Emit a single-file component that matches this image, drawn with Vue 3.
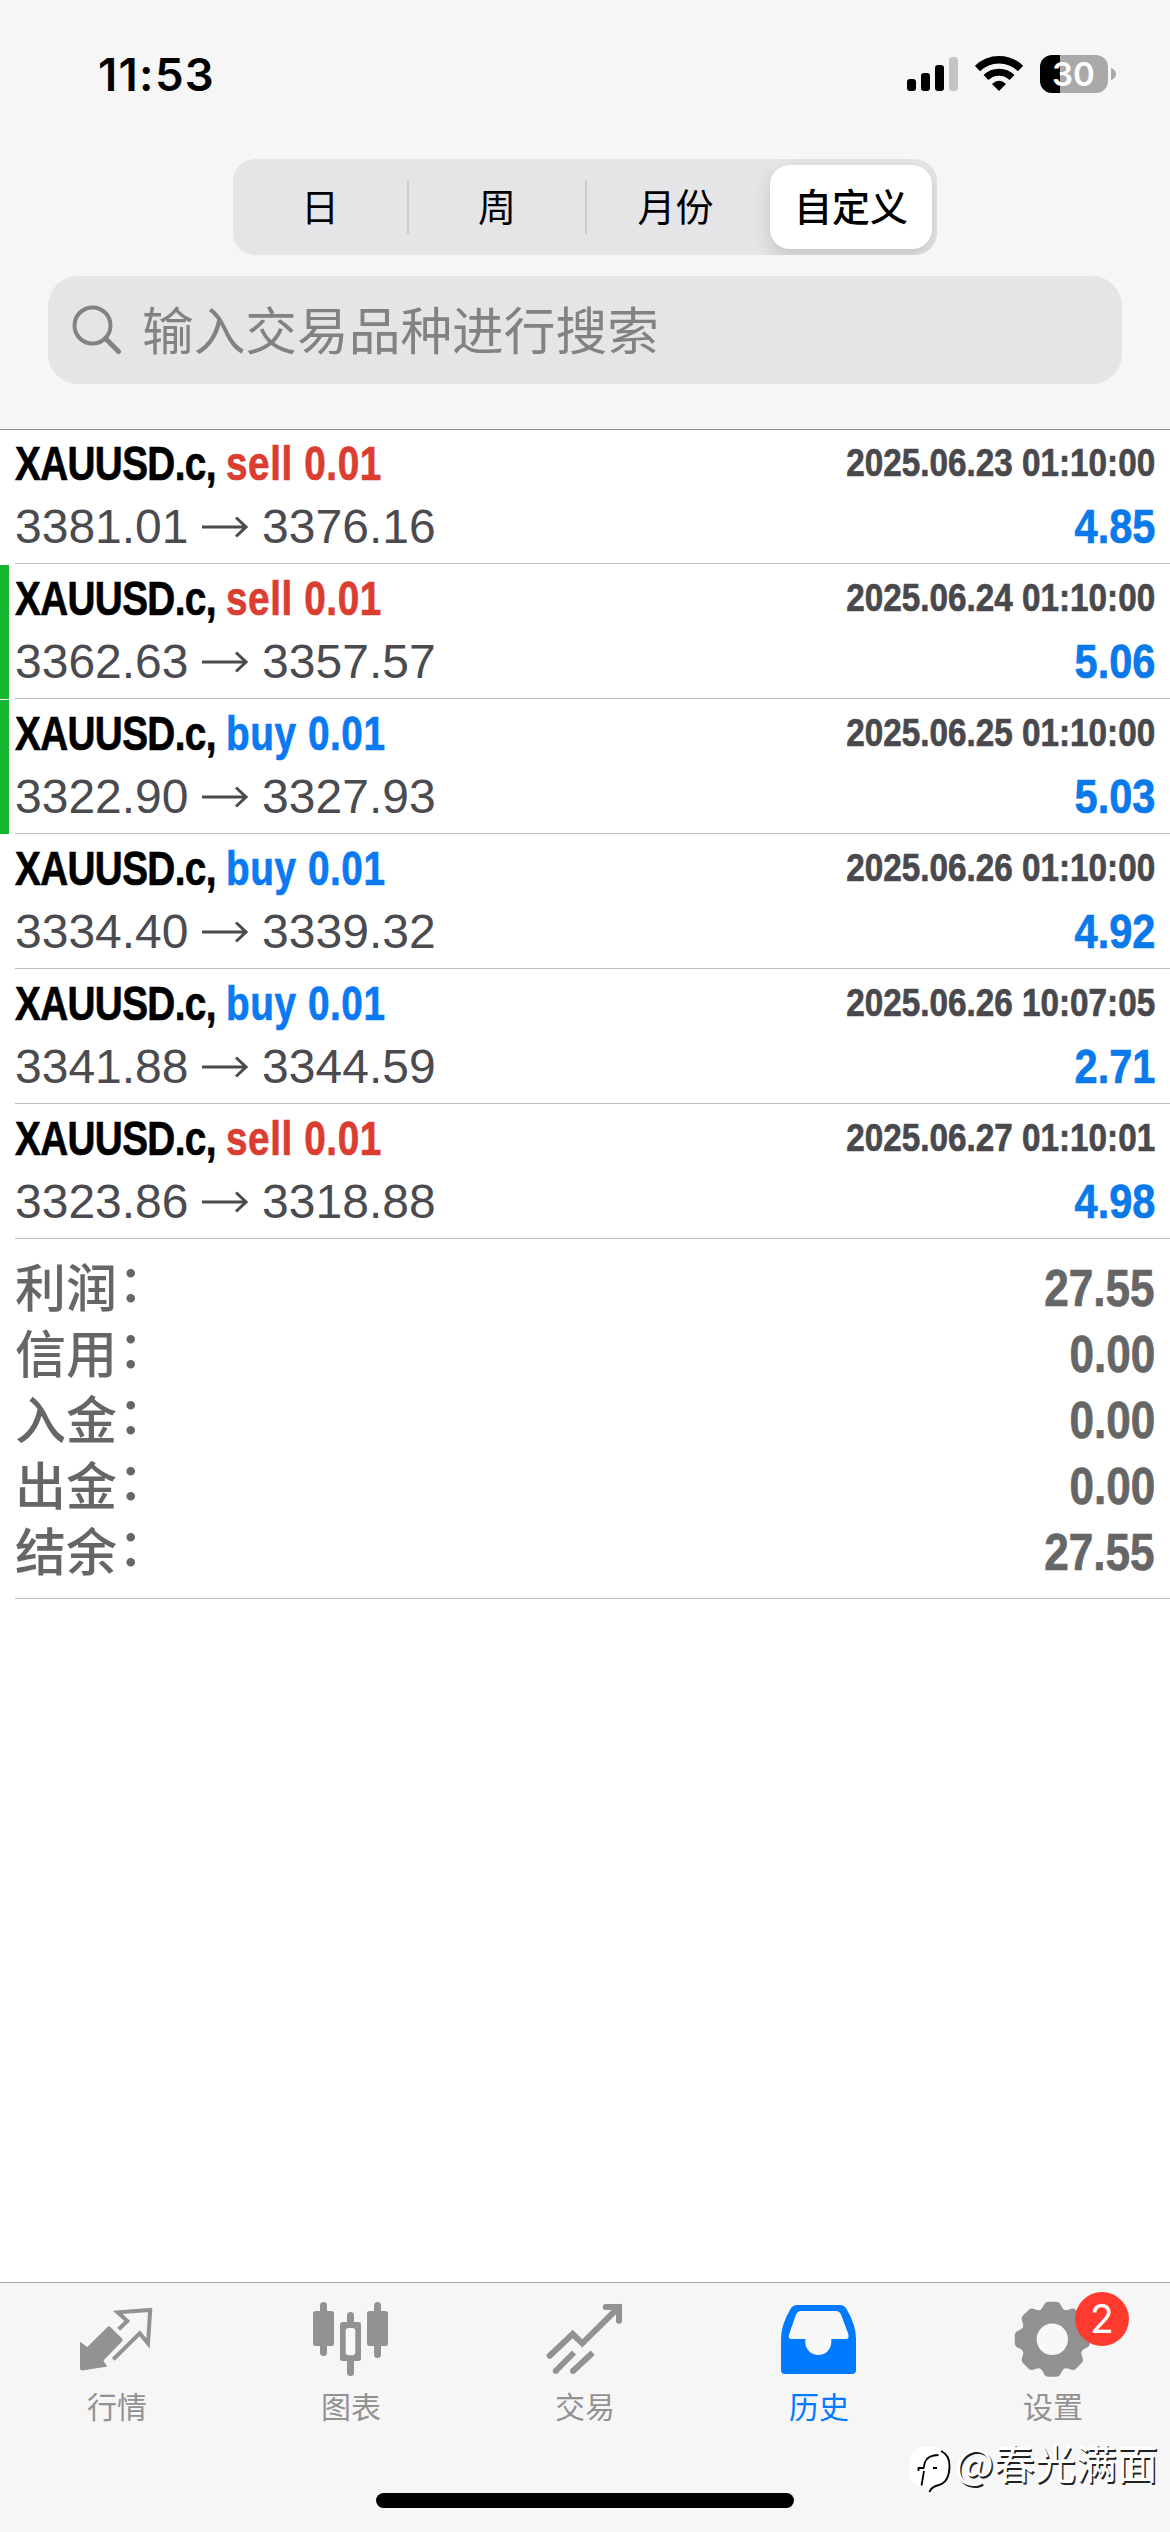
<script setup>
const segments = ['日', '周', '月份']
const deals = [
  { side: 'sell', open: '3381.01', close: '3376.16', time: '2025.06.23 01:10:00', profit: '4.85' },
  { side: 'sell', open: '3362.63', close: '3357.57', time: '2025.06.24 01:10:00', profit: '5.06', marked: true },
  { side: 'buy', open: '3322.90', close: '3327.93', time: '2025.06.25 01:10:00', profit: '5.03', marked: true },
  { side: 'buy', open: '3334.40', close: '3339.32', time: '2025.06.26 01:10:00', profit: '4.92' },
  { side: 'buy', open: '3341.88', close: '3344.59', time: '2025.06.26 10:07:05', profit: '2.71' },
  { side: 'sell', open: '3323.86', close: '3318.88', time: '2025.06.27 01:10:01', profit: '4.98' },
]
const totals = [
  { label: '利润', value: '27.55' },
  { label: '信用', value: '0.00' },
  { label: '入金', value: '0.00' },
  { label: '出金', value: '0.00' },
  { label: '结余', value: '27.55' },
]
const teeth = [0, 45, 90, 135, 180, 225, 270, 315]
</script>

<template>
  <div class="screen">
    <header class="header">
      <div class="status">
        <span class="clock">11:53</span>
        <div class="status-icons">
          <svg class="signal" width="52" height="38" viewBox="0 0 52 38">
            <rect x="0" y="24" width="9" height="12" rx="3" />
            <rect x="14" y="18" width="9" height="18" rx="3" />
            <rect x="28" y="10" width="9" height="26" rx="3" />
            <rect x="42" y="2" width="9" height="34" rx="3" fill="#c4c4c4" />
          </svg>
          <svg class="wifi" width="48" height="38" viewBox="0 0 48 38">
            <path d="M2.500 13.500A30.500 30.500 0 0 1 45.500 13.500" fill="none" stroke="#000" stroke-width="7.500" />
            <path d="M11 22.500A18.500 18.500 0 0 1 37 22.500" fill="none" stroke="#000" stroke-width="7" />
            <path d="M24 36L17 29Q24 22.500 31 29Z" />
          </svg>
          <div class="battery">
            <div class="cell"><span>30</span></div>
            <svg width="5" height="12" viewBox="0 0 5 12"><path d="M0 0Q5 2 5 6T0 12Z" fill="#a9a9a9" /></svg>
          </div>
        </div>
      </div>
      <div class="segmented">
        <span v-for="s in segments" :key="s" class="segment">{{ s }}</span>
        <span class="segment selected">自定义</span>
      </div>
      <div class="search">
        <svg width="50" height="50" viewBox="0 0 50 50" fill="none" stroke="#828285" stroke-width="4" stroke-linecap="round">
          <circle cx="20.500" cy="20.500" r="18" />
          <path d="M33.500 33.500L46.500 46.500" stroke-width="5" />
        </svg>
        <span>输入交易品种进行搜索</span>
      </div>
    </header>

    <main class="content">
      <div v-for="d in deals" :key="d.time" class="deal" :class="{ marked: d.marked }">
        <div class="deal-body">
          <div class="row top">
            <span class="name">XAUUSD.c, <span :class="d.side">{{ d.side }} 0.01</span></span>
            <span class="time">{{ d.time }}</span>
          </div>
          <div class="row bottom">
            <span class="prices">
              {{ d.open }}
              <svg width="46" height="22" viewBox="0 0 46 22" fill="none" stroke="#4b4b4f" stroke-width="3">
                <path d="M0 11H44M34 1.500L44 11L34 20.500" />
              </svg>
              {{ d.close }}
            </span>
            <span class="profit">{{ d.profit }}</span>
          </div>
        </div>
      </div>
      <div class="totals">
        <div v-for="t in totals" :key="t.label" class="total">
          <span class="label">{{ t.label }}<span class="colon">：</span></span>
          <span class="value">{{ t.value }}</span>
        </div>
      </div>
    </main>

    <footer class="footer">
      <nav class="tabs">
        <div class="tab">
          <svg width="84" height="84" viewBox="0 0 84 84">
            <path d="M5 43.700L12.300 49L32.500 29Q34 27.500 35.500 29L47 40.500Q48.500 42 47 43.500L28.300 62.700L32.300 68.500L7.500 72.500Q5 72.500 5 70Z" fill="currentColor" />
            <path d="M43.700 31.300L52.300 23L42.700 14.300L75.200 12L73 45.300L64.700 35.300L38.300 61.300" fill="none" stroke="currentColor" stroke-width="4" />
          </svg>
          <span>行情</span>
        </div>
        <div class="tab">
          <svg width="84" height="84" viewBox="0 0 84 84" fill="currentColor">
            <rect x="4" y="13" width="21" height="35" rx="2.500" />
            <rect x="11" y="4" width="7" height="54" rx="3.500" />
            <rect x="58" y="13" width="21" height="35" rx="2.500" />
            <rect x="65" y="4" width="7" height="56" rx="3.500" />
            <rect x="31" y="24" width="21" height="39" rx="2.500" />
            <rect x="38" y="14" width="7" height="64" rx="3.500" />
            <rect x="36.700" y="30" width="9.600" height="27.300" rx="3" fill="#f8f8f8" />
          </svg>
          <span>图表</span>
        </div>
        <div class="tab">
          <svg width="84" height="84" viewBox="0 0 84 84" fill="none" stroke="currentColor" stroke-width="6">
            <path d="M6.700 57.700L29.700 36L39.300 45.300L76 9M62.700 9H76V22.700" stroke-linecap="round" />
            <path d="M76 15V6H79V15Z" fill="currentColor" stroke="none" />
            <path d="M12.700 73L31 54.500M30 73L49.700 54.700" />
            <circle cx="12.700" cy="73" r="3" fill="currentColor" stroke="none" />
            <circle cx="30" cy="73" r="3" fill="currentColor" stroke="none" />
          </svg>
          <span>交易</span>
        </div>
        <div class="tab active">
          <svg width="84" height="84" viewBox="0 0 84 84">
            <path d="M20 7H63Q67 7 69.500 11Q79 27 79 41V72Q79 76 75 76H8Q4 76 4 72V41Q4 27 13.500 11Q16 7 20 7Z" fill="currentColor" />
            <path d="M24 13H59Q62.500 13 64 16.500L71.300 36Q72.500 41 69 41H54.300V44A13 13 0 0 1 28.300 44V41H14Q11 41 12 36.500L19 16.500Q20.500 13 24 13Z" fill="#f8f8f8" />
          </svg>
          <span>历史</span>
        </div>
        <div class="tab">
          <svg width="84" height="84" viewBox="0 0 84 84">
            <g transform="translate(41.300 41.300)" fill="currentColor">
              <circle r="31" />
              <path
                v-for="a in teeth"
                :key="a"
                d="M-14 -28Q-10.500 -29.500 -9 -33Q-7.500 -37.500 -4 -37.500H4Q7.500 -37.500 9 -33Q10.500 -29.500 14 -28Z"
                :transform="`rotate(${a})`"
              />
              <circle r="15.700" fill="#f8f8f8" />
            </g>
          </svg>
          <span>设置</span>
          <b class="badge">2</b>
        </div>
      </nav>
      <div class="home"></div>
      <div class="watermark">
        <svg width="44" height="48" viewBox="0 0 44 48">
          <path d="M14 0H28Q41 3 41 19Q40 36 29 38L20 44L19 39H12Q0 37 0 22Q0 3 14 0Z" fill="#fff" />
          <path d="M32 4Q41 8 40.500 20Q40 35 30 38Q22 40 20.500 45" fill="none" stroke="#000" stroke-width="1.900" />
          <path d="M12.500 38.500L15 24M9.500 24V21H14.500L16 15Q19 8 29.500 8M24 21H28" fill="none" stroke="#000" stroke-width="1.800" />
        </svg>
        <span>@春光满面</span>
      </div>
    </footer>
  </div>
</template>

<style>
body {
  background: #fff;
}
</style>

<style scoped>
.screen {
  width: 1170px;
  height: 2532px;
  display: flex;
  flex-direction: column;
  background: #fff;
  overflow: hidden;
  font-family: "Liberation Sans", "Noto Sans CJK SC", sans-serif;
}
.header {
  box-sizing: border-box;
  height: 430px;
  background: #f6f6f6;
  border-bottom: 1px solid #8f8f8f;
}
.status {
  height: 159px;
  display: flex;
  justify-content: space-between;
  align-items: flex-start;
  box-sizing: border-box;
  padding: 55px 54px 0 98px;
}
.clock {
  font: 600 45.500px/40px Inter, sans-serif;
  letter-spacing: 1.300px;
}
.status-icons {
  display: flex;
  height: 38px;
}
.wifi {
  margin-left: 16px;
}
.battery {
  margin-left: 17px;
  display: flex;
  align-items: center;
  gap: 3px;
}
.cell {
  width: 68px;
  height: 38px;
  border-radius: 12px;
  background: linear-gradient(90deg, #000 20px, #a9a9a9 20px);
  color: #fff;
  font: 600 33px/38px Inter, sans-serif;
  text-align: center;
  text-indent: -1px;
}
.segmented {
  width: 704px;
  height: 96px;
  box-sizing: border-box;
  margin: 0 auto;
  padding: 6px 5px 6px 0;
  border-radius: 22px;
  background: #e5e5e7;
  display: flex;
  align-items: center;
  overflow: hidden;
}
.segment {
  flex: 0 0 176px;
  height: 54px;
  box-sizing: border-box;
  font: 400 38px/50px "Noto Sans CJK SC", sans-serif;
  text-align: center;
  border-right: 2px solid #cdcdd0;
}
.segment:nth-child(2) {
  flex-basis: 178px;
}
.segment:nth-child(3) {
  flex-basis: 183px;
  border-color: transparent;
  padding-right: 4px;
}
.segment.selected {
  flex: 1;
  height: 84px;
  line-height: 80px;
  border: 0;
  border-radius: 20px;
  background: #fff;
  font-weight: 500;
  box-shadow: 0 8px 18px rgba(0, 0, 0, 0.14);
}
.search {
  height: 108px;
  margin: 21px 48px 0;
  box-sizing: border-box;
  padding-left: 24px;
  display: flex;
  align-items: center;
  gap: 20px;
  border-radius: 30px;
  background: #e5e5e7;
  color: #828285;
  font: 400 51.700px/100px "Noto Sans CJK SC", sans-serif;
}
.search span {
  padding-bottom: 5px;
}
.deal {
  height: 135px;
  box-sizing: border-box;
  padding-left: 15px;
}
.deal.marked {
  background: linear-gradient(#15b730, #15b730) 0 0 / 9px 134px no-repeat;
}
.deal-body {
  height: 134px;
  box-sizing: border-box;
  padding-right: 15px;
  border-bottom: 1px solid #bebec0;
}
.row {
  display: flex;
  justify-content: space-between;
}
.top {
  height: 66px;
  line-height: 66px;
}
.bottom {
  height: 62px;
  line-height: 60px;
}
.name,
.time,
.profit,
.value {
  font-weight: 700;
  white-space: pre;
  -webkit-text-stroke: 0.700px currentColor;
}
.name {
  font-size: 49px;
  letter-spacing: -0.800px;
  transform: scaleX(0.79);
  transform-origin: left;
}
.name span {
  letter-spacing: 0.750px;
}
.sell {
  color: #db3d30;
}
.buy {
  color: #0a79f2;
}
.time {
  font-size: 39px;
  color: #49494d;
  line-height: 66px;
  transform: scaleX(0.853);
  transform-origin: right;
}
.prices {
  display: flex;
  align-items: center;
  gap: 13.800px;
  font-size: 48px;
  color: #4b4b4f;
}
.profit {
  font-size: 48px;
  line-height: 62px;
  color: #0a79e9;
  transform: scaleX(0.865);
  transform-origin: right;
}
.totals {
  height: 359px;
  box-sizing: border-box;
  margin-left: 15px;
  padding: 15px 15px 0 0;
  border-bottom: 1px solid #bebec0;
}
.total {
  height: 66px;
  display: flex;
  justify-content: space-between;
  color: #666;
}
.label {
  display: flex;
  font: 500 51px/69px "Liberation Sans", "Noto Sans CJK SC", sans-serif;
}
.colon {
  line-height: 60px;
  margin-left: 1px;
}
.value {
  font-size: 51px;
  line-height: 68px;
  transform: scaleX(0.865);
  transform-origin: right;
}
.content {
  flex: 1;
}
.footer {
  position: relative;
  box-sizing: border-box;
  height: 250px;
  background: #f6f6f6;
  border-top: 1px solid #ababab;
}
.tabs {
  display: flex;
  padding-top: 15px;
}
.tab {
  position: relative;
  flex: 1;
  display: flex;
  flex-direction: column;
  align-items: center;
  color: #929292;
  font: 400 30px/46px "Noto Sans CJK SC", sans-serif;
}
.tab.active {
  color: #007aff;
}
.badge {
  position: absolute;
  left: 139px;
  top: -6px;
  width: 54px;
  height: 54px;
  border-radius: 50%;
  background: #ff3b30;
  color: #fff;
  font: 400 39px/54px Inter, sans-serif;
  text-align: center;
}
.home {
  width: 418px;
  height: 15px;
  margin: 65px auto 0;
  border-radius: 8px;
  background: #000;
}
.watermark {
  position: absolute;
  left: 909px;
  top: 164px;
  display: flex;
  gap: 2px;
  color: #fff;
  font: 400 41px/28px "Noto Sans CJK SC", sans-serif;
  text-shadow: 1.500px 1.500px 0 #222;
}
</style>
